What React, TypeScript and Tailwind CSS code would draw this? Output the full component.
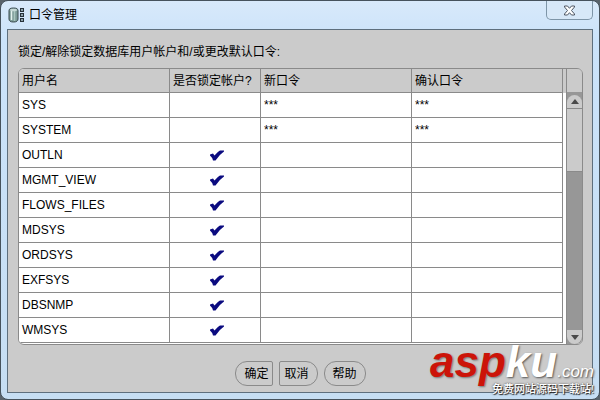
// App.tsx
import clsx from "clsx";

type Account = {
  name: string;
  locked: boolean;
  password: string;
};

const accounts: Account[] = [
  { name: "SYS", locked: false, password: "***" },
  { name: "SYSTEM", locked: false, password: "***" },
  { name: "OUTLN", locked: true, password: "" },
  { name: "MGMT_VIEW", locked: true, password: "" },
  { name: "FLOWS_FILES", locked: true, password: "" },
  { name: "MDSYS", locked: true, password: "" },
  { name: "ORDSYS", locked: true, password: "" },
  { name: "EXFSYS", locked: true, password: "" },
  { name: "DBSNMP", locked: true, password: "" },
  { name: "WMSYS", locked: true, password: "" },
];

function DatabaseIcon() {
  return (
    <svg width="17" height="16" viewBox="0 0 17 16" aria-hidden="true">
      <path d="M1 3.5 Q1 1 5.5 1 T10 3.5 V12 Q10 15 5.5 15 T1 12Z" fill="#7d9c98" stroke="#38484c" />
      <path d="M3.5 4 V13" stroke="#e4f2ee" strokeWidth="1.5" />
      <path d="M6.5 4 V14" stroke="#a9c6bf" strokeWidth="1.5" />
      <ellipse cx="5.5" cy="3" rx="3.5" ry="1.3" fill="#c5d8d5" />
      <rect x="12.5" y="1.5" width="3" height="3" fill="#8fa3ad" stroke="#27323a" />
      <rect x="12.5" y="6.5" width="3" height="3" fill="#8fa3ad" stroke="#27323a" />
      <rect x="12.5" y="11.5" width="3" height="3" fill="#8fa3ad" stroke="#27323a" />
    </svg>
  );
}

function TitleBar() {
  return (
    <header className="flex h-7 items-start justify-between">
      <div className="flex h-7 items-center gap-1 pl-px text-black">
        <DatabaseIcon />
        <h1 className="text-xs">口令管理</h1>
      </div>
      <button
        type="button"
        aria-label="关闭"
        className="flex h-[19px] w-[47px] items-center justify-center rounded-b-[5px] border border-t-0 border-[#7e95a8] bg-[#d7e8f8]"
      >
        <svg width="13" height="11" viewBox="0 0 13 11" aria-hidden="true">
          <path
            d="M1.5 1 H4.5 L6.5 3.3 L8.5 1 H11.5 V2 L8.5 5.5 L11.5 9 V10 H8.5 L6.5 7.7 L4.5 10 H1.5 V9 L4.5 5.5 L1.5 2Z"
            fill="#fff"
            stroke="#4c5562"
          />
        </svg>
      </button>
    </header>
  );
}

function LockBox({ account }: { account: Account }) {
  return (
    <label className="relative flex h-6 items-center justify-center pl-1">
      <input
        type="checkbox"
        aria-label={account.name}
        defaultChecked={account.locked}
        className="peer absolute inset-0 appearance-none"
      />
      <svg
        width="14"
        height="11"
        viewBox="0 0 14 11"
        aria-hidden="true"
        className="pointer-events-none invisible peer-checked:visible"
      >
        <path d="M0 4.5 L3 3.5 L4.5 5.5 Q8 1.5 10 0.5 H14 V1.5 Q9.5 4.5 5.5 10.5 H3 Q2 7 0 5.5Z" fill="#0b0b80" />
      </svg>
    </label>
  );
}

function AccountTable() {
  return (
    <table className="grow table-fixed border-separate border-spacing-0 text-left text-xs">
      <thead>
        <tr className="h-6 bg-[#cbcbcb]">
          <th className="w-[151px] border-r border-b border-[#8a8a8a] px-[3px] font-normal">用户名</th>
          <th className="w-[91px] border-r border-b border-[#8a8a8a] px-[3px] font-normal whitespace-nowrap">
            是否锁定帐户?
          </th>
          <th className="border-r border-b border-[#8a8a8a] px-[3px] font-normal">新口令</th>
          <th className="border-r border-b border-[#8a8a8a] px-[3px] font-normal">确认口令</th>
        </tr>
      </thead>
      <tbody>
        {accounts.map((account) => (
          <tr key={account.name} className="h-[25px] bg-white">
            <td className="border-r border-b border-[#8a8a8a] px-[3px]">{account.name}</td>
            <td className="border-r border-b border-[#8a8a8a] p-0">
              <LockBox account={account} />
            </td>
            <td className="border-r border-b border-[#8a8a8a] p-0">
              <input
                type="text"
                aria-label={`${account.name} 新口令`}
                defaultValue={account.password}
                className="block h-6 w-full px-[3px] outline-none"
              />
            </td>
            <td className="border-r border-b border-[#8a8a8a] p-0">
              <input
                type="text"
                aria-label={`${account.name} 确认口令`}
                defaultValue={account.password}
                className="block h-6 w-full px-[3px] outline-none"
              />
            </td>
          </tr>
        ))}
      </tbody>
    </table>
  );
}

function ScrollBar() {
  return (
    <div className="-mb-px flex w-4 shrink-0 flex-col border-l border-[#8a8a8a] bg-[#979797]">
      <div className="h-[23px] shrink-0 bg-[#cbcbcb]" />
      <button
        type="button"
        aria-label="向上滚动"
        className="mt-[3px] flex h-[13px] shrink-0 items-center justify-center rounded-t-lg bg-[#cbcbcb]"
      >
        <svg width="8" height="5" viewBox="0 0 8 5" aria-hidden="true">
          <path d="M0 5 L4 0 L8 5Z" fill="#4a4a4a" />
        </svg>
      </button>
      <div className="h-16 shrink-0 border-y border-[#8a8a8a] bg-[#cbcbcb]" />
      <div className="grow" />
      <button
        type="button"
        aria-label="向下滚动"
        className="flex h-[14px] shrink-0 items-center justify-center rounded-b-lg bg-[#cbcbcb]"
      >
        <svg width="8" height="5" viewBox="0 0 8 5" aria-hidden="true">
          <path d="M0 0 L4 5 L8 0Z" fill="#4a4a4a" />
        </svg>
      </button>
    </div>
  );
}

function DialogButton({ label, className }: { label: string; className: string }) {
  return (
    <button
      type="button"
      className={clsx("h-[25px] border border-[#8a8a8a] bg-[#cbcbcb] text-xs", className)}
    >
      {label}
    </button>
  );
}

function Watermark() {
  return (
    <div className="pointer-events-none absolute right-[5px] bottom-1 flex flex-col items-end">
      <div className="flex items-baseline italic">
        <span className="text-[44px] leading-[44px] font-bold text-[#cc1409] [text-shadow:1px_1px_2px_#777]">asp</span>
        <span className="text-[44px] leading-[44px] font-bold text-white [text-shadow:1px_1px_2px_#555]">ku</span>
        <span className="text-[17px] leading-5 text-white [text-shadow:1px_1px_2px_#444]">.com</span>
      </div>
      <div className="-mt-px text-[11px] leading-3 font-medium text-white [text-shadow:1px_1px_1px_#222,0_0_2px_#444]">
        免费网站源码下载站!
      </div>
    </div>
  );
}

export default function App() {
  return (
    <div className="min-h-screen bg-[#59636b] font-['Liberation_Sans','Noto_Sans_CJK_SC',sans-serif]">
      <div className="relative flex min-h-screen flex-col rounded-lg border border-[#46525c] bg-linear-to-b from-[#d8e9fa] via-[#cbe3fa] via-10% to-[#c6def3] px-1.5 pb-1.5">
        <TitleBar />
        <main className="flex grow flex-col border border-[#5e6f7d] bg-[#cbcbcb] pt-3.5 pr-[9px] pl-2.5 text-black">
          <p className="text-xs leading-4">锁定/解除锁定数据库用户帐户和/或更改默认口令:</p>

          {/* Account grid and its scroll bar */}
          <div className="mt-2 flex overflow-hidden rounded-md border border-[#8a8a8a] bg-white pb-px">
            <AccountTable />
            <div className="w-[3px] shrink-0 bg-linear-to-b from-[#cbcbcb] from-[24px] to-white to-[24px]" />
            <ScrollBar />
          </div>

          {/* Actions */}
          <div className="mt-4 flex justify-center gap-1.5">
            <DialogButton label="确定" className="rounded-l-xl rounded-r-xs pr-1 pl-2" />
            <DialogButton label="取消" className="rounded-l-xs rounded-r-xl pr-2 pl-1" />
            <DialogButton label="帮助" className="rounded-xl px-2" />
          </div>
        </main>
        <Watermark />
      </div>
    </div>
  );
}
